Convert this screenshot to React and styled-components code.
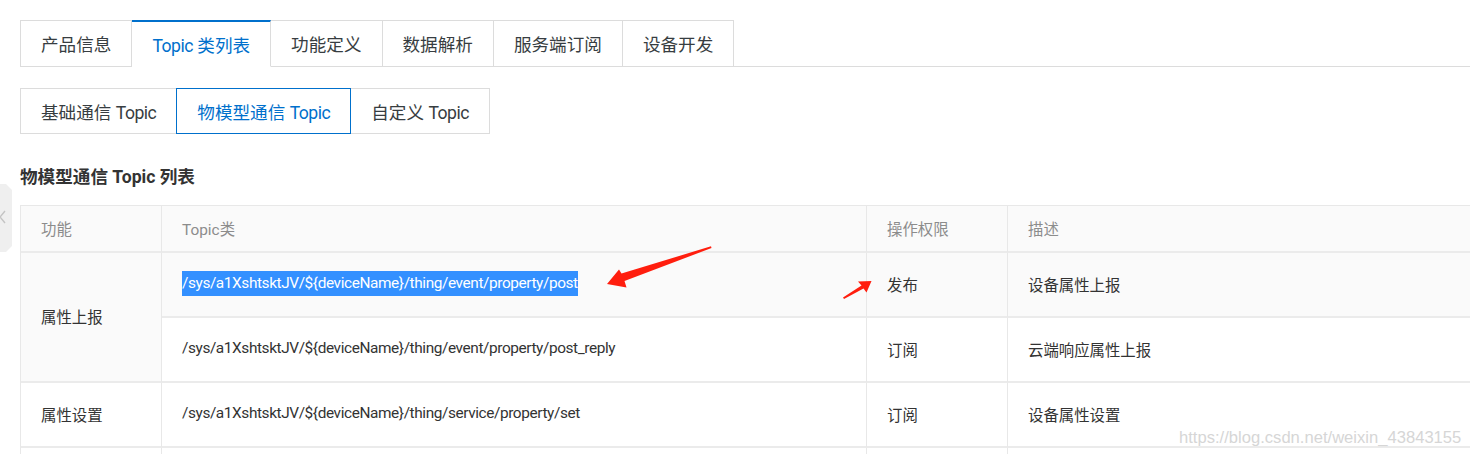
import React from "react";
import styled, { createGlobalStyle } from "styled-components";

const Global = createGlobalStyle`
  html, body { margin: 0; padding: 0; background: #fff; }
  body {
    font-family: Roboto, "Noto Sans CJK SC", sans-serif;
    overflow: hidden;
  }
  * { box-sizing: border-box; }
`;

const Page = styled.div`
  position: relative;
  width: 1470px;
  height: 454px;
  overflow: hidden;
  padding: 20px 0 0 20px;
`;

const TabBar = styled.div`
  display: flex;
  height: 47px;
`;

const PrimaryTab = styled.div`
  height: 47px;
  padding: 0 20px;
  display: flex;
  align-items: center;
  font-size: 17.6px;
  color: ${(p) => (p.$active ? "#0070cc" : "#373d41")};
  background: #fff;
  border-top: ${(p) => (p.$active ? "2px solid #0070cc" : "1px solid #dcdcdc")};
  border-right: 1px solid #dcdcdc;
  border-bottom: 1px solid ${(p) => (p.$active ? "#fff" : "#dcdcdc")};
  border-left: ${(p) => (p.$first ? "1px solid #dcdcdc" : "0")};
  white-space: nowrap;
`;

const Filler = styled.div`
  flex: 1;
  border-bottom: 1px solid #dcdcdc;
`;

const SubTabBar = styled.div`
  display: flex;
  height: 46px;
  margin-top: 21px;
`;

const SubTab = styled.div`
  position: relative;
  z-index: ${(p) => (p.$active ? 1 : 0)};
  height: 46px;
  padding: 0 20px;
  margin-left: ${(p) => (p.$first ? "0" : "-1px")};
  display: flex;
  align-items: center;
  font-size: 17.6px;
  color: ${(p) => (p.$active ? "#0070cc" : "#373d41")};
  border: 1px solid ${(p) => (p.$active ? "#0070cc" : "#dcdcdc")};
  background: #fff;
  white-space: nowrap;
`;

const Label = styled.span`
  white-space: pre;
`;

const Latin = styled.span`
  letter-spacing: -0.5px;
`;

const Heading = styled.h3`
  margin: 31px 0 16px;
  font-size: 17.6px;
  line-height: 24px;
  font-weight: bold;
  color: #333;
`;

const Grid = styled.div`
  display: grid;
  width: 1500px;
  grid-template-columns: 141px 705px 141px 1fr;
  grid-template-rows: 47px 65px 65px 65px 65px;
  border-top: 1px solid #e8e8e8;
  border-left: 1px solid #e8e8e8;
`;

const Cell = styled.div`
  display: flex;
  align-items: center;
  padding: 0 0 2px 20px;
  font-size: 15.4px;
  color: ${(p) => (p.$head ? "#8c8c8c" : "#333")};
  background: ${(p) => (p.$shade ? "#fafafa" : "#fff")};
  border-right: 1px solid #e8e8e8;
  border-bottom: 2px solid #ebebeb;
  grid-row: ${(p) => (p.$span ? `span ${p.$span}` : "auto")};
  white-space: nowrap;
`;

const Path = styled.span`
  display: inline-block;
  letter-spacing: -0.4px;
  line-height: 25px;
  background: ${(p) => (p.$selected ? "#3390ff" : "transparent")};
  color: ${(p) => (p.$selected ? "#fff" : "#333")};
`;

const Overlay = styled.svg`
  position: absolute;
  left: 0;
  top: 0;
  pointer-events: none;
`;

const SideHandle = styled.svg`
  position: absolute;
  left: 0;
  top: 184px;
`;

const Watermark = styled.div`
  position: absolute;
  left: 1179px;
  top: 428px;
  font-family: "Liberation Sans", Arial, sans-serif;
  font-size: 16.6px;
  color: #d6d6d6;
  text-shadow: 0 0 1px #fff;
  white-space: nowrap;
`;

const primaryTabs = [
  [null, "产品信息"],
  ["Topic", " 类列表"],
  [null, "功能定义"],
  [null, "数据解析"],
  [null, "服务端订阅"],
  [null, "设备开发"],
];
const subTabs = ["基础通信 ", "物模型通信 ", "自定义 "];
const base = "/sys/a1XshtsktJV/${deviceName}/thing/";

export default function App() {
  return (
    <>
      <Global />
      <Page>
        <TabBar>
          {primaryTabs.map(([lat, cjk], i) => (
            <PrimaryTab key={cjk} $first={i === 0} $active={i === 1}>
              <Label>
                {lat && <Latin>{lat}</Latin>}
                {cjk}
              </Label>
            </PrimaryTab>
          ))}
          <Filler />
        </TabBar>
        <SubTabBar>
          {subTabs.map((t, i) => (
            <SubTab key={t} $first={i === 0} $active={i === 1}>
              <Label>
                {t}
                <Latin>Topic</Latin>
              </Label>
            </SubTab>
          ))}
        </SubTabBar>
        <Heading>物模型通信 Topic 列表</Heading>
        <Grid>
          <Cell $head $shade>功能</Cell>
          <Cell $head $shade>Topic类</Cell>
          <Cell $head $shade>操作权限</Cell>
          <Cell $head $shade>描述</Cell>

          <Cell $shade $span={2}>属性上报</Cell>
          <Cell $shade>
            <Path $selected>{base + "event/property/post"}</Path>
          </Cell>
          <Cell $shade>发布</Cell>
          <Cell $shade>设备属性上报</Cell>

          <Cell>
            <Path>{base + "event/property/post_reply"}</Path>
          </Cell>
          <Cell>订阅</Cell>
          <Cell>云端响应属性上报</Cell>

          <Cell>属性设置</Cell>
          <Cell>
            <Path>{base + "service/property/set"}</Path>
          </Cell>
          <Cell>订阅</Cell>
          <Cell>设备属性设置</Cell>

          <Cell />
          <Cell />
          <Cell />
          <Cell />
        </Grid>

        <SideHandle width="14" height="70" viewBox="0 0 14 70">
          <polygon points="0,0 6,0 12,6 12,62 6,68 0,68" fill="#efefef" />
          <polyline points="5,27 0,33 5,39" fill="none" stroke="#c4c4c4" strokeWidth="1.4" />
        </SideHandle>

        <Overlay width="1470" height="454" viewBox="0 0 1470 454">
          <polygon
            points="711,246.3 621.5,273.5 619,269.5 607,284 626.5,287.5 624.5,281 711.5,248"
            fill="#ff1e0e"
          />
          <polygon
            points="843,297.5 861.5,285.5 858,281.5 871.5,281 866.5,292.5 863.5,288.5 844,299"
            fill="#ff1e0e"
          />
        </Overlay>

        <Watermark>https://blog.csdn.net/weixin_43843155</Watermark>
      </Page>
    </>
  );
}
